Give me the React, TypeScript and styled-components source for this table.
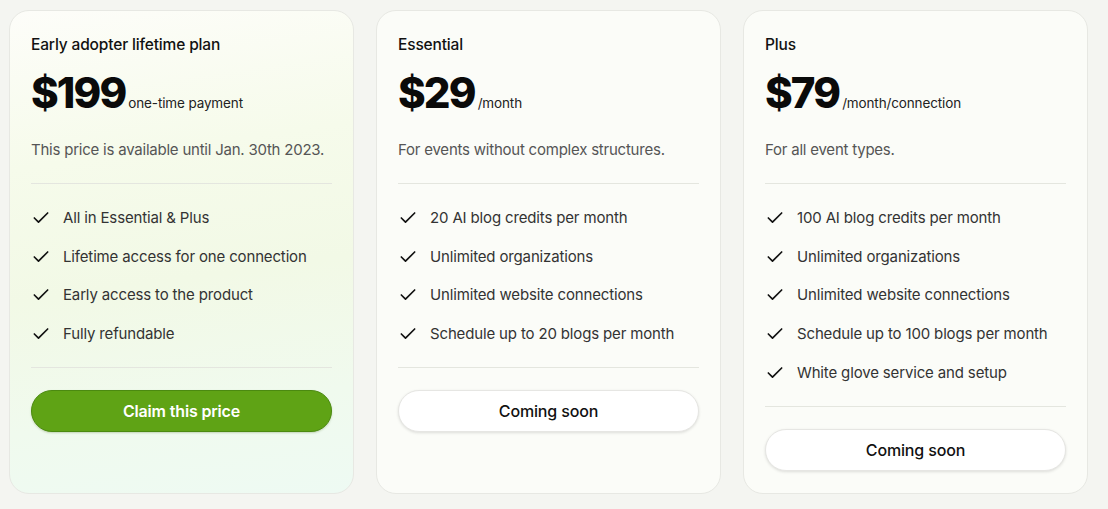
import React from "react";
import styled, { createGlobalStyle } from "styled-components";
import { Check } from "lucide-react";

const GlobalStyle = createGlobalStyle`
  html, body { margin: 0; padding: 0; background: #f4f5f1; }
  body { font-family: Inter, "Noto Sans", sans-serif; -webkit-font-smoothing: antialiased; }
  * { box-sizing: border-box; }
`;

const Page = styled.div`
  display: grid;
  grid-template-columns: repeat(3, 345px);
  column-gap: 22px;
  align-items: stretch;
  padding: 10px 0 16px 9px;
`;

const Card = styled.div<{ $featured?: boolean }>`
  display: flex;
  flex-direction: column;
  border: 1px solid #e7e8e3;
  border-radius: 20px;
  padding: 24px 21px 22px;
  background: ${(p) =>
    p.$featured
      ? "linear-gradient(172deg, #fdfdf9 0%, #f6fbeb 30%, #f2f9e6 55%, #f0faee 80%, #eefaf3 100%)"
      : "#fbfcf8"};
`;

const Title = styled.div`
  font-size: 15.5px;
  line-height: 20px;
  font-weight: 500;
  color: #111;
  letter-spacing: -0.01em;
`;

const PriceRow = styled.div`
  display: flex;
  align-items: baseline;
  gap: 3px;
  margin-top: 13px;
`;

const Amount = styled.span`
  font-size: 42px;
  line-height: 50px;
  font-weight: 800;
  color: #0a0a0a;
  letter-spacing: -0.045em;
`;

const Period = styled.span`
  font-size: 13.5px;
  color: #222;
  letter-spacing: -0.01em;
`;

const Description = styled.p`
  margin: 21px 0 0;
  font-size: 15px;
  line-height: 22px;
  color: #555;
  letter-spacing: -0.015em;
`;

const Divider = styled.hr<{ $flush?: boolean }>`
  border: none;
  height: 1px;
  background: #e4e6df;
  margin: ${(p) => (p.$flush ? 0 : "22px 0 0")};
  width: 100%;
`;

const List = styled.ul`
  list-style: none;
  margin: 0;
  padding: 23px 0 22px;
  display: flex;
  flex-direction: column;
  gap: 16.67px;
`;

const Item = styled.li`
  display: flex;
  align-items: center;
  gap: 12px;
  font-size: 15px;
  line-height: 22px;
  color: #333;
  letter-spacing: -0.01em;
  svg { flex: none; color: #111; }
`;

const Button = styled.button<{ $primary?: boolean }>`
  margin-top: 22px;
  height: 42px;
  border-radius: 21px;
  width: 100%;
  font-family: inherit;
  font-size: 16px;
  font-weight: ${(p) => (p.$primary ? 600 : 500)};
  letter-spacing: -0.01em;
  cursor: pointer;
  color: ${(p) => (p.$primary ? "#fff" : "#111")};
  background: ${(p) => (p.$primary ? "#5fa315" : "#fff")};
  border: 1px solid ${(p) => (p.$primary ? "#4b8a10" : "#e6e6e3")};
  box-shadow: ${(p) =>
    p.$primary ? "0 1px 2px rgba(60,100,10,0.25)" : "0 1px 3px rgba(0,0,0,0.12)"};
`;

type Plan = {
  title: string;
  amount: string;
  period: string;
  description: string;
  features: string[];
  cta: string;
  featured?: boolean;
};

const plans: Plan[] = [
  {
    title: "Early adopter lifetime plan",
    amount: "$199",
    period: "one-time payment",
    description: "This price is available until Jan. 30th 2023.",
    features: [
      "All in Essential & Plus",
      "Lifetime access for one connection",
      "Early access to the product",
      "Fully refundable",
    ],
    cta: "Claim this price",
    featured: true,
  },
  {
    title: "Essential",
    amount: "$29",
    period: "/month",
    description: "For events without complex structures.",
    features: [
      "20 AI blog credits per month",
      "Unlimited organizations",
      "Unlimited website connections",
      "Schedule up to 20 blogs per month",
    ],
    cta: "Coming soon",
  },
  {
    title: "Plus",
    amount: "$79",
    period: "/month/connection",
    description: "For all event types.",
    features: [
      "100 AI blog credits per month",
      "Unlimited organizations",
      "Unlimited website connections",
      "Schedule up to 100 blogs per month",
      "White glove service and setup",
    ],
    cta: "Coming soon",
  },
];

export default function App() {
  return (
    <>
      <GlobalStyle />
      <Page>
        {plans.map((p) => (
          <Card key={p.title} $featured={p.featured}>
            <Title>{p.title}</Title>
            <PriceRow>
              <Amount>{p.amount}</Amount>
              <Period>{p.period}</Period>
            </PriceRow>
            <Description>{p.description}</Description>
            <Divider />
            <List>
              {p.features.map((f) => (
                <Item key={f}>
                  <Check size={20} strokeWidth={2} />
                  {f}
                </Item>
              ))}
            </List>
            <Divider $flush />
            <Button $primary={p.featured}>{p.cta}</Button>
          </Card>
        ))}
      </Page>
    </>
  );
}
